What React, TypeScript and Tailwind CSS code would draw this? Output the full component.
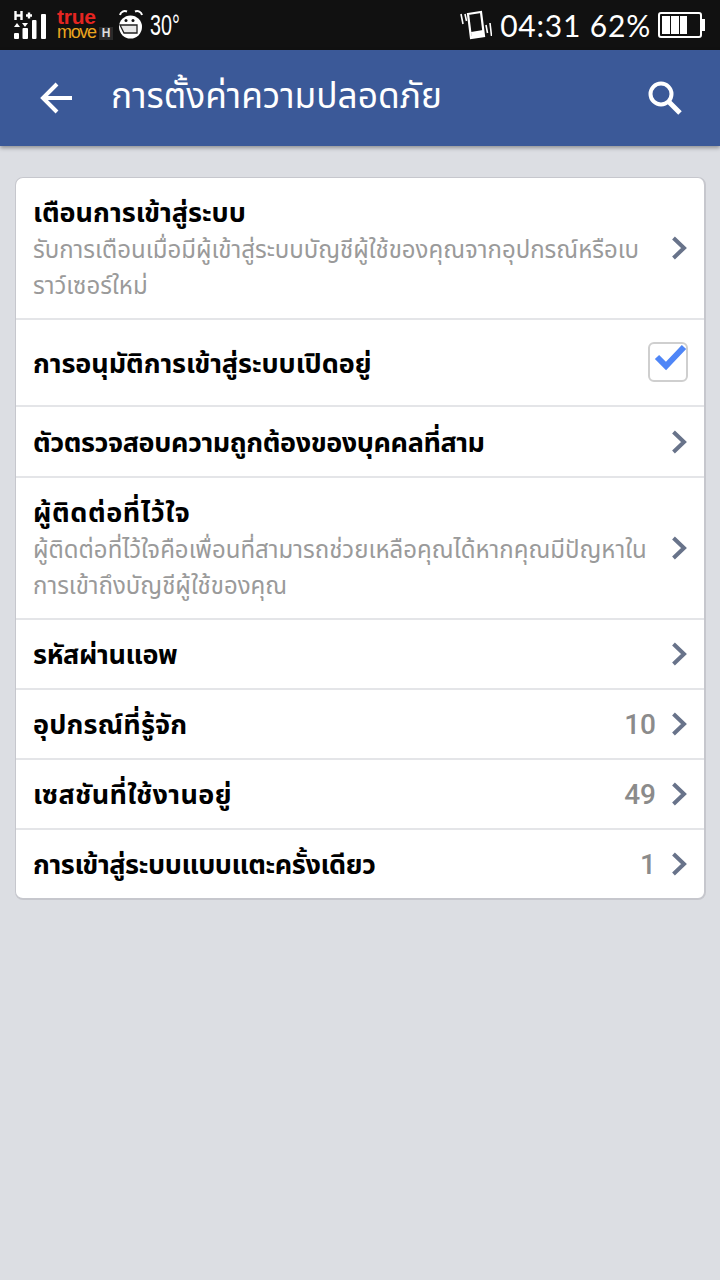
import React from "react";

function Chevron() {
  return (
    <svg width="16" height="24" viewBox="0 0 16 24" className="shrink-0 mr-[1px]">
      <path d="M2.5 2 L13 12 L2.5 22" fill="none" stroke="#68738a" strokeWidth="4" />
    </svg>
  );
}

type RowProps = {
  title: string;
  sub?: string[];
  count?: string;
  check?: boolean;
  h: string;
  track?: string;
};

function Row({ title, sub, count, check, h, track = "" }: RowProps) {
  return (
    <div className={`flex items-center border-b-2 border-[#e4e5e8] last:border-b-0 pl-[17px] pr-[16px] ${h}`}>
      <div className="flex-1 min-w-0 pt-[4px]">
        <div className={`text-[27px] leading-[36px] font-bold text-black whitespace-nowrap ${track}`}>{title}</div>
        {sub && (
          <div className="text-[24px] leading-[36px] text-[#9a9a9a] mt-[1px] whitespace-nowrap">
            {sub.map((line) => (
              <div key={line}>{line}</div>
            ))}
          </div>
        )}
      </div>
      {count && (
        <div className="text-[28px] font-['Roboto',sans-serif] font-medium text-[#8b8b8b] mr-[15px] leading-none mt-[2px]">{count}</div>
      )}
      {check ? (
        <div className="w-[40px] h-[40px] border-2 border-[#cfcfcf] rounded-[6px] relative mb-[2px]">
          <svg width="36" height="30" viewBox="0 0 36 30" className="absolute -top-[2px] left-[2px]">
            <path d="M5 15 L14 24 L32 5" fill="none" stroke="#4f86f7" strokeWidth="6" />
          </svg>
        </div>
      ) : (
        <Chevron />
      )}
    </div>
  );
}

export default function App() {
  return (
    <div className="w-[720px] h-[1280px] bg-[#dcdee3] font-['Noto_Sans_Thai','Noto_Sans','DejaVu_Sans',sans-serif] flex flex-col overflow-hidden">
      {/* status bar */}
      <div className="h-[50px] bg-[#111111] flex items-center justify-between pl-[14px] pr-[14px] text-white shrink-0">
        <div className="flex items-center">
          <svg width="34" height="30" viewBox="0 0 34 30">
            <path d="M1.5 1 V10 M7.5 1 V10 M1.5 5.5 H7.5 M12 5.5 H18 M15 2.5 V8.5" stroke="#fff" strokeWidth="2.4" fill="none" />
            <path d="M3 13 L6 17 L0 17Z M11 17 L14 13 L8 13Z" fill="#fff" />
            <rect x="0" y="23" width="5" height="6" rx="1" fill="#fff" />
            <rect x="8.5" y="18" width="5.5" height="11" rx="1" fill="#fff" />
            <rect x="18" y="10" width="4.5" height="19" rx="1" fill="#fff" />
            <rect x="27" y="4" width="5" height="25" rx="1" fill="#fff" />
          </svg>
          <svg width="42" height="30" viewBox="0 0 42 30" className="ml-[9px] overflow-visible">
            <text x="0" y="14" fontSize="21" fontWeight="700" fill="#e52521" fontFamily="Liberation Sans" textLength="39">true</text>
            <text x="0" y="28" fontSize="18" fill="#eba51f" fontFamily="Liberation Sans" textLength="40">move</text>
          </svg>
          <div className="self-end mb-0 w-[14px] h-[13px] bg-[#2a2a2a] text-[12px] leading-[13px] text-center font-bold text-[#ddd] font-['Liberation_Sans',sans-serif]">H</div>
          <svg width="26" height="30" viewBox="0 0 26 30" className="ml-[5px]">
            <path d="M2 5 A5 5 0 0 1 9 1.5 M17 1.5 A5 5 0 0 1 24 5" fill="none" stroke="#fff" strokeWidth="2" />
            <circle cx="12.5" cy="17" r="11.5" fill="#fff" />
            <path d="M2 15 H19 V23 H6Z" fill="#e8e8e8" stroke="#222" strokeWidth="1.3" />
            <circle cx="8" cy="10.5" r="1.5" fill="#111" />
            <circle cx="15" cy="10.5" r="1.5" fill="#111" />
          </svg>
          <span className="ml-[6px] text-[29px] leading-none font-['Liberation_Sans',sans-serif] scale-x-[0.68] origin-left">30°</span>
        </div>
        <div className="flex items-center">
          <svg width="32" height="30" viewBox="0 0 32 30">
            <path d="M8 4 L21 2 L24 26 L11 28Z" fill="#111" stroke="#fff" strokeWidth="2.2" />
            <path d="M11 22 L23 20 L24 26 L12 28Z" fill="#fff" />
            <path d="M1 4 L3 14 M5 4 L6.5 11 M26 15 L27.5 23 M30 13 L31.5 26" stroke="#fff" strokeWidth="1.6" />
          </svg>
          <span className="ml-[8px] text-[30px] leading-none font-['Lato',sans-serif] font-normal tracking-[0.8px] whitespace-nowrap">04:31 62%</span>
          <svg width="48" height="30" viewBox="0 0 48 30" className="ml-[7px]">
            <rect x="1" y="3" width="42" height="24" rx="2" fill="none" stroke="#fff" strokeWidth="2" />
            <rect x="4" y="6" width="8" height="18" fill="#fff" />
            <rect x="13" y="6" width="8" height="18" fill="#fff" />
            <rect x="22" y="6" width="7" height="18" fill="#fff" />
            <rect x="44" y="9" width="3" height="12" fill="#fff" />
          </svg>
        </div>
      </div>

      {/* header */}
      <div className="h-[96px] bg-[#3b5998] flex items-center pl-[39px] pr-[37px] shrink-0 shadow-[0_2px_4px_rgba(0,0,0,0.35)]">
        <svg width="36" height="34" viewBox="0 0 36 34">
          <path d="M33 17 H4 M18 3 L4 17 L18 31" fill="none" stroke="#fff" strokeWidth="4" />
        </svg>
        <div className="ml-[36px] flex-1 text-white text-[35.3px] leading-none whitespace-nowrap">การตั้งค่าความปลอดภัย</div>
        <svg width="36" height="36" viewBox="0 0 36 36">
          <circle cx="14" cy="14" r="10.5" fill="none" stroke="#fff" strokeWidth="4" />
          <path d="M22 22 L33 33" stroke="#fff" strokeWidth="5" />
        </svg>
      </div>

      {/* list */}
      <div className="ml-[15px] w-[691px] mt-[31px] bg-white rounded-[8px] border-r-2 border-b-2 border-l border-t border-[#c6c7cd] overflow-hidden">
        <Row h="h-[142px]" title="เตือนการเข้าสู่ระบบ" sub={["รับการเตือนเมื่อมีผู้เข้าสู่ระบบบัญชีผู้ใช้ของคุณจากอุปกรณ์หรือเบ", "ราว์เซอร์ใหม่"]} />
        <Row h="h-[87px]" title="การอนุมัติการเข้าสู่ระบบเปิดอยู่" check track="tracking-[-0.07px]" />
        <Row h="h-[71px]" title="ตัวตรวจสอบความถูกต้องของบุคคลที่สาม" track="tracking-[-0.4px]" />
        <Row h="h-[142px]" title="ผู้ติดต่อที่ไว้ใจ" track="tracking-[0.6px]" sub={["ผู้ติดต่อที่ไว้ใจคือเพื่อนที่สามารถช่วยเหลือคุณได้หากคุณมีปัญหาใน", "การเข้าถึงบัญชีผู้ใช้ของคุณ"]} />
        <Row h="h-[70px]" title="รหัสผ่านแอพ" track="tracking-[-0.35px]" />
        <Row h="h-[70px]" title="อุปกรณ์ที่รู้จัก" count="10" track="tracking-[0.2px]" />
        <Row h="h-[70px]" title="เซสชันที่ใช้งานอยู่" count="49" track="tracking-[0.4px]" />
        <Row h="h-[68px]" title="การเข้าสู่ระบบแบบแตะครั้งเดียว" count="1" track="tracking-[-0.4px]" />
      </div>
    </div>
  );
}
